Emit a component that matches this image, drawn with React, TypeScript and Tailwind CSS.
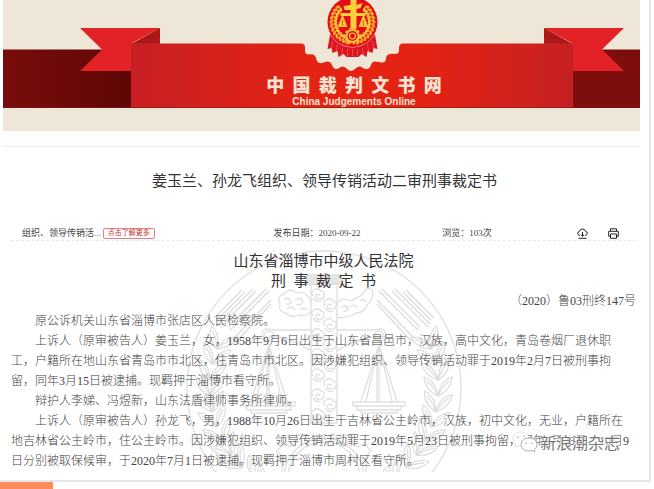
import { Fragment } from "react";

const WAVE =
  "M128 43.5H298Q302 43.5 302 47V51Q302 54 305 54.5Q312 53 313 58Q314 64 319 63Q327 59 329 65Q331 71 336 68Q340 65 343 68Q348 74 353 68Q357 65 360 68Q366 71 368 65Q369 60 376 62Q383 64 383 58Q384 53 391 54Q396 54 396 51V48Q396 43.5 400 43.5H570V108H128Z";

const PARAGRAPHS = [
  ["原公诉机关山东省淄博市张店区人民检察院。"],
  [
    "上诉人（原审被告人）姜玉兰，女，1958年9月6日出生于山东省昌邑市，汉族，高中文化，青岛卷烟厂退休职",
    "工，户籍所在地山东省青岛市市北区，住青岛市市北区。因涉嫌犯组织、领导传销活动罪于2019年2月7日被刑事拘",
    "留，同年3月15日被逮捕。现羁押于淄博市看守所。",
  ],
  ["辩护人李娣、冯煜新，山东法盾律师事务所律师。"],
  [
    "上诉人（原审被告人）孙龙飞，男，1988年10月26日出生于吉林省公主岭市，汉族，初中文化，无业，户籍所在",
    "地吉林省公主岭市，住公主岭市。因涉嫌犯组织、领导传销活动罪于2019年5月23日被刑事拘留，同年6月28日、10月9",
    "日分别被取保候审，于2020年7月1日被逮捕。现羁押于淄博市周村区看守所。",
  ],
];

function Emblem() {
  const grains = [];
  for (let i = 0; i < 12; i++) {
    const deg = 105 + i * 11;
    const a = (deg * Math.PI) / 180;
    grains.push({ x: Math.cos(a), y: Math.sin(a), deg });
  }
  return (
    <g transform="translate(349.5 22)">
      <path
        d="M-22 10L-25 27L-21 26L-20 31L-15 29L-14 35L-9 32L-6 35H6L9 32L14 35L15 29L20 31L21 26L25 27L22 10Z"
        fill="#dc1520"
      />
      <path
        d="M-20 19L-21 26M-15 22L-16 29M-10 26L-11 33M-5 27V34M0 27V34M5 27V34M10 26L11 33M15 22L16 29M20 19L21 26"
        stroke="#f0707a"
        strokeWidth="0.6"
      />
      <circle r="25.5" fill="#f3d9cd" />
      <circle r="25" fill="#e60b18" />
      {grains.map((g) => (
        <g key={g.deg}>
          {[-1, 1].map((side) => (
            <g key={side} transform={`scale(${side} 1)`}>
              <ellipse rx="2.4" ry="1.4" fill="#fbc636" transform={`translate(${g.x * 17} ${g.y * 17}) rotate(${g.deg + 50})`} />
              <ellipse rx="2.6" ry="1.5" fill="#f0a52b" transform={`translate(${g.x * 21} ${g.y * 21}) rotate(${g.deg + 130})`} />
            </g>
          ))}
        </g>
      ))}
      <path d="M-2-22H4V-17L10-19L8-14L4-13V7H-2V-12H-8L-9-16L-2-17Z" fill="#fbd03c" />
      <path d="M-12-9H13V-6H-12Z" fill="#fbd03c" />
      <path d="M-10-8L-15 5H-5ZM11-8L6 5H16Z" fill="#f8c235" />
      <path d="M-10-2V4M11-2V4" stroke="#e05a1c" strokeWidth="0.8" />
      <circle cy="14" r="6" fill="#e60b18" stroke="#f8c235" strokeWidth="2" />
      <circle cy="14" r="7.5" fill="none" stroke="#f8c235" strokeWidth="1.5" strokeDasharray="2.5 2" />
      <circle cy="14" r="3" fill="none" stroke="#fbd03c" strokeWidth="1.2" />
    </g>
  );
}

function Banner() {
  return (
    <header className="relative ml-[3px] mr-[9px] bg-[#eee7d8]">
      <svg viewBox="0 0 637 131" className="block w-full" aria-hidden="true">
        <defs>
          <linearGradient id="main" x1="0" x2="1">
            <stop offset="0" stopColor="#c81f25" />
            <stop offset="0.4" stopColor="#e42313" />
            <stop offset="0.65" stopColor="#e42313" />
            <stop offset="1" stopColor="#c62024" />
          </linearGradient>
          <linearGradient id="tail" x1="0" x2="1">
            <stop offset="0" stopColor="#780d0b" />
            <stop offset="1" stopColor="#5e0706" />
          </linearGradient>
        </defs>
        <path d="M0 49.5H130V108H0Z" fill="url(#tail)" />
        <path d="M569 49.5H637V108H569Z" fill="#7d0e0c" />
        <path d="M77 28H157L128 43.5V71H77L99 49.5Z" fill="#e22226" />
        <path d="M157 28V44H128Z" fill="#ac1717" />
        <path d="M541 28H621L599 49.5L621 71H570V43.5Z" fill="#e22226" />
        <path d="M541 28V44H570Z" fill="#ac1717" />
        <path d={WAVE} fill="url(#main)" />
        <path d="M0 107.5H637" stroke="#8a1410" strokeOpacity="0.6" />
        <Emblem />
      </svg>
      <div className="absolute inset-x-0 top-[74px] pl-[65px] text-center text-[#f3e3d3]">
        <h1 className="whitespace-pre font-['Noto_Sans_CJK_SC',sans-serif] text-[18px] font-black leading-[21px]">
          {"中  国  裁  判  文  书  网"}
        </h1>
        <p className="font-['Liberation_Sans',sans-serif] text-[10px] font-bold leading-[13px]">China Judgements Online</p>
      </div>
    </header>
  );
}

function Scale({ x }: { x: number }) {
  return (
    <g transform={`translate(${x} 0)`}>
      <path d="M0 95L-18 151M0 95L-13 151M0 95V151M0 95L13 151M0 95L18 151M-2 100V151" />
      <path d="M-26 152H26V156H-26ZM-22 156H22V160H-22ZM-18 160H18V163H-18Z" />
    </g>
  );
}

function Seal() {
  const leaves = [];
  for (let i = 0; i < 11; i++) {
    const deg = -24 + i * 8;
    const a = (deg * Math.PI) / 180;
    leaves.push({ deg, x: Math.cos(a) * 114, y: Math.sin(a) * 114 });
  }
  const swirls = [];
  for (let i = 0; i < 13; i++) swirls.push({ x: i % 2 ? 144 : 132, y: 46 + i * 10 });

  return (
    <svg
      viewBox="0 0 276 222"
      className="absolute left-1/2 top-[9px] -z-10 w-[276px] -translate-x-1/2"
      fill="none"
      stroke="#dfdfdf"
      strokeWidth="1.3"
      aria-hidden="true"
    >
      <circle cx="138" cy="138" r="137" />
      {/* column */}
      <path d="M121 25H155V34H121Z" fill="#e6e6e6" />
      <path d="M125 34H151V173H125ZM125 29H151" />
      {swirls.map((s) => (
        <path
          key={s.y}
          d={`M${s.x - 5} ${s.y}q-3 -4 1 -6q4 -3 7 1q4 0 3 5q-1 4 -6 3q-4 -1 -2 -4q3 -2 4 1M${s.x - 5} ${s.y + 2}q3 5 8 3`}
        />
      ))}
      {/* ornaments on both sides of the column head */}
      <path d="M125 52q-5 -12 -14 -9q-8 -6 -13 1q-8 2 -4 10q-2 8 6 9q6 6 13 2q8 2 12 -4M98 50q4 -4 7 1q-1 4 -5 3M109 50q5 -4 8 2q-2 5 -7 2M101 59q5 -4 8 1M114 60q4 -3 7 0" />
      <path d="M151 54q4 -7 10 -4q6 2 9 -2q8 -3 10 -9q6 -2 7 3q0 9 -6 13q-3 8 -11 8q-8 5 -19 5M155 58q4 -4 7 0q-1 4 -5 3M164 57q5 -4 7 1M174 51q4 -3 6 1" />
      {/* beam and scales */}
      <path d="M125 80H86Q76 76 76 87M125 101Q111 91 91 87H76M151 80H190Q200 76 200 87M151 101Q165 91 185 87H200" />
      <circle cx="83" cy="86" r="5" />
      <circle cx="193" cy="86" r="5" />
      <Scale x={83} />
      <Scale x={193} />
      {/* wheat */}
      {[-1, 1].map((side) => (
        <g key={side} transform={`translate(138 138) scale(${side} 1)`}>
          <path
            d="M55-97L94-58M58-99L96-61M53-88L90-50M68-97L104-61M71-99L106-64M79-96L107-68M82-98L110-70M53-84L88-46"
            strokeWidth="1.6"
          />
          {leaves.map((l) => (
            <g key={l.deg} transform={`translate(${l.x} ${l.y}) rotate(${l.deg})`}>
              <path d="M0 8Q-13 2 -14 -11Q-2 -7 0 8ZM-11 -7Q-4 -1 0 8" />
              <path d="M0 8Q13 2 14 -11Q2 -7 0 8ZM11 -7Q4 -1 0 8" />
            </g>
          ))}
        </g>
      ))}
      {/* gear */}
      <circle cx="138" cy="228" r="40" />
      <circle cx="138" cy="228" r="36" />
      <path d="M96 222V206L91 201L98 193L104 197L111 192V185H121L123 188Q138 183 153 188L155 185H165V192L172 197L178 193L185 201L180 206V222" />
    </svg>
  );
}

function DownloadIcon() {
  return (
    <svg viewBox="0 0 11 11" className="size-[11px]" fill="none" stroke="currentColor" aria-hidden="true">
      <path d="M3 7.5Q0.7 7.3 0.7 5.3Q0.8 3.6 2.5 3.4Q3 1 5.5 1Q8 1 8.5 3.4Q10.3 3.6 10.3 5.3Q10.3 7.3 8 7.5M5.5 4V8M4 6.8L5.5 8.2L7 6.8M1.5 10.3H9.5" />
    </svg>
  );
}

function PrintIcon() {
  return (
    <svg viewBox="0 0 11 11" className="size-[11px]" fill="none" stroke="currentColor" aria-hidden="true">
      <path d="M2.5 3V0.8H8.5V3M2.5 8.3H0.7V3.3H10.3V8.3H8.5M2.5 6H8.5V10.3H2.5Z" />
    </svg>
  );
}

function WechatIcon() {
  return (
    <svg viewBox="0 0 26 22" className="h-[22px] w-[26px]" fill="#fff" stroke="#999" strokeWidth="0.8" aria-hidden="true">
      <path d="M9 1C4 1 1 4 1 8Q1 11 4 13L3 16L7 14.5Q16 15 17 8Q16 1 9 1Z" stroke="#ddd" />
      <path d="M17 7C12 7 9 10 9 13.5C9 17 12 20 17 20L20 19.5L23 21L22.5 18.5Q25 16.5 25 13.5C25 10 22 7 17 7Z" />
      <path d="M14 11.5V13M20 11.5V13M6 5.5V7M12 4.5V6" stroke="#777" />
    </svg>
  );
}

export default function App() {
  return (
    <div className="bg-white font-['Liberation_Serif','Noto_Sans_CJK_SC',serif] text-[#444]">
      <main className="relative mr-[3px] overflow-hidden border-b-2 border-r-2 border-[#e8e8e8] bg-white pb-[9px]">
        <Banner />
        <hr className="ml-[3px] mr-[9px] mt-[15px] border-[#ececec]" />

        <h2 className="mt-[24px] text-center text-[15px] leading-[20px] text-[#333]">
          姜玉兰、孙龙飞组织、领导传销活动二审刑事裁定书
        </h2>

        <div className="ml-[11px] mr-[13px] mt-[33px] flex h-[17px] items-center border-b border-dashed border-[#e8e8e8] pt-[2px] text-[9px] leading-[12px]">
          <div className="flex w-[42%] items-center gap-[2px] pl-[11px]">
            <span>组织、领导传销活...</span>
            <button className="h-[11px] rounded-[2px] border border-[#e58080] px-1 text-[7px] leading-[9px] text-[#c33]">
              点击了解更多
            </button>
          </div>
          <span className="w-[27%]">发布日期：2020-09-22</span>
          <span className="flex-1">浏览：103次</span>
          <div className="flex gap-5 pr-[17px] text-[#222]">
            <button aria-label="下载">
              <DownloadIcon />
            </button>
            <button aria-label="打印">
              <PrintIcon />
            </button>
          </div>
        </div>

        <article className="relative isolate ml-[11px] mr-[13px] pt-[10px] text-[12px] font-light leading-[20px]">
          <Seal />
          <h3 className="text-center text-[15px] font-normal text-[#333]">山东省淄博市中级人民法院</h3>
          <h3 className="whitespace-pre text-center text-[15px] font-normal text-[#333]">{"刑  事  裁  定  书"}</h3>
          <p className="text-right">（2020）鲁03刑终147号</p>
          {PARAGRAPHS.map((lines) => (
            <p key={lines[0]} className="whitespace-nowrap indent-[24px]">
              {lines.map((line, i) => (
                <Fragment key={line}>
                  {i > 0 && <br />}
                  {line}
                </Fragment>
              ))}
            </p>
          ))}
          <div className="absolute bottom-[18px] right-[16px] flex items-center gap-[2px] font-['Noto_Sans_CJK_SC',sans-serif] text-[16px] font-normal text-[#777]">
            <WechatIcon />
            <span className="[text-shadow:0_0_2px_#fff,0_0_2px_#fff,0_0_3px_#fff]">新浪潮杂志</span>
          </div>
        </article>
      </main>
      <div className="-mt-px h-[8px] w-[53px] bg-[#ff8c5a]" />
    </div>
  );
}
